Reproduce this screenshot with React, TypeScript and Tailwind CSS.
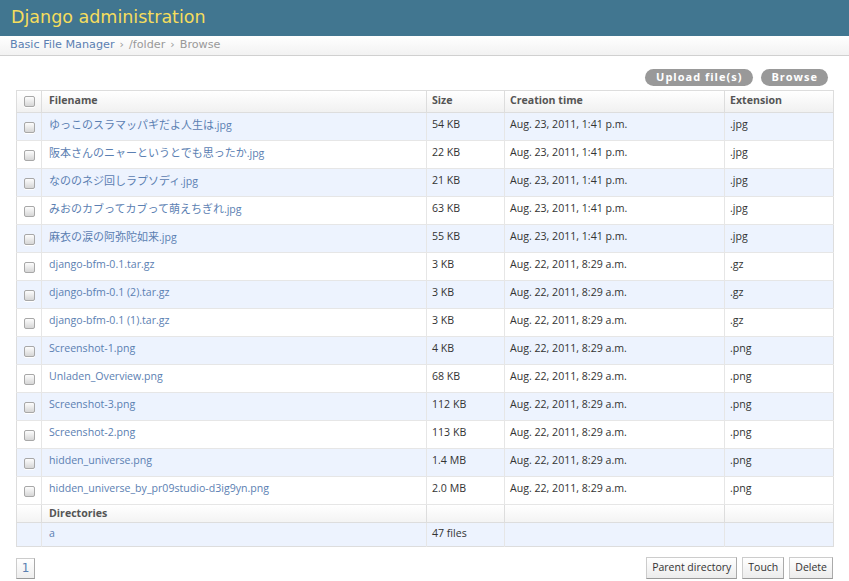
import React from "react";

const files: [string, string, string, string, boolean][] = [
  ["ゆっこのスラマッパギだよ人生は", "54 KB", "Aug. 23, 2011, 1:41 p.m.", ".jpg", true],
  ["阪本さんのニャーというとでも思ったか", "22 KB", "Aug. 23, 2011, 1:41 p.m.", ".jpg", true],
  ["なののネジ回しラプソディ", "21 KB", "Aug. 23, 2011, 1:41 p.m.", ".jpg", true],
  ["みおのカブってカブって萌えちぎれ", "63 KB", "Aug. 23, 2011, 1:41 p.m.", ".jpg", true],
  ["麻衣の涙の阿弥陀如来", "55 KB", "Aug. 23, 2011, 1:41 p.m.", ".jpg", true],
  ["django-bfm-0.1.tar.gz", "3 KB", "Aug. 22, 2011, 8:29 a.m.", ".gz", false],
  ["django-bfm-0.1 (2).tar.gz", "3 KB", "Aug. 22, 2011, 8:29 a.m.", ".gz", false],
  ["django-bfm-0.1 (1).tar.gz", "3 KB", "Aug. 22, 2011, 8:29 a.m.", ".gz", false],
  ["Screenshot-1.png", "4 KB", "Aug. 22, 2011, 8:29 a.m.", ".png", false],
  ["Unladen_Overview.png", "68 KB", "Aug. 22, 2011, 8:29 a.m.", ".png", false],
  ["Screenshot-3.png", "112 KB", "Aug. 22, 2011, 8:29 a.m.", ".png", false],
  ["Screenshot-2.png", "113 KB", "Aug. 22, 2011, 8:29 a.m.", ".png", false],
  ["hidden_universe.png", "1.4 MB", "Aug. 22, 2011, 8:29 a.m.", ".png", false],
  ["hidden_universe_by_pr09studio-d3ig9yn.png", "2.0 MB", "Aug. 22, 2011, 8:29 a.m.", ".png", false],
];

function Check() {
  return (
    <span className="inline-block w-[11px] h-[11px] rounded-[2px] border border-[#a8a8a8] bg-gradient-to-b from-[#fdfdfd] to-[#d6d6d6] shadow-[0_1px_0_#fff]" />
  );
}

const sans = "font-['Open_Sans','Noto_Sans_CJK_JP',sans-serif]";
const dv = "font-['DejaVu_Sans',sans-serif]";
const btn =
  "h-[22px] px-[5px] border border-[#ccc] border-b-[#999] border-r-[#aaa] bg-gradient-to-b from-white to-[#ececec] flex items-center text-[10.5px] text-[#333]";

export default function App() {
  return (
    <div className={`w-[849px] h-[581px] bg-white overflow-hidden ${sans}`}>
      <div className="h-[36px] bg-[#417690] flex items-center px-[11px]">
        <h1 className={`${dv} text-[17.5px] text-[#f5dd5d] leading-none`}>Django administration</h1>
      </div>
      <div className={`h-[20px] border-b border-[#d0d0d0] bg-gradient-to-b from-white to-[#f2f2f2] flex items-center px-[10px] text-[11.2px] ${dv}`}>
        <span className="text-[#5b80b2]">Basic File Manager</span>
        <span className="text-[#999] mx-[5px]">›</span>
        <span className="text-[#999]">/folder</span>
        <span className="text-[#999] mx-[5px]">›</span>
        <span className="text-[#999]">Browse</span>
      </div>
      <div className="px-[16px] pt-[13px]">
        <div className="flex justify-end gap-[8px] pr-[5px] h-[17px]">
          <span className="h-[17px] px-[11px] rounded-full bg-[#999] text-white text-[11px] font-bold tracking-[1px] flex items-center">Upload file(s)</span>
          <span className="h-[17px] px-[10px] rounded-full bg-[#999] text-white text-[11px] font-bold tracking-[1px] flex items-center">Browse</span>
        </div>
        <table className="mt-[4px] w-[818px] border-collapse border border-[#ddd] text-[10.6px] table-fixed">
          <colgroup>
            <col className="w-[25px]" />
            <col className="w-[385px]" />
            <col className="w-[78px]" />
            <col className="w-[220px]" />
            <col />
          </colgroup>
          <thead>
            <tr className="h-[22px] bg-gradient-to-b from-white to-[#f0f0f0] text-[#555] font-bold">
              <th className="border-r border-b border-[#ddd] align-middle"><div className="flex justify-center"><Check /></div></th>
              <th className="border-r border-b border-[#ddd] text-left px-[7px] align-top pt-[2px]">Filename</th>
              <th className="border-r border-b border-[#ddd] text-left px-[5px] align-top pt-[2px]">Size</th>
              <th className="border-r border-b border-[#ddd] text-left px-[5px] align-top pt-[2px]">Creation time</th>
              <th className="border-b border-[#ddd] text-left px-[5px] align-top pt-[2px]">Extension</th>
            </tr>
          </thead>
          <tbody>
            {files.map((f, i) => (
              <tr key={i} className={`h-[28px] ${i % 2 === 0 ? "bg-[#edf3fe]" : "bg-white"} text-[#333]`}>
                <td className="border-r border-b border-[#e6e6e6] align-middle"><div className="flex justify-center pt-[2px]"><Check /></div></td>
                <td className="border-r border-b border-[#e6e6e6] px-[7px] text-[#5b80b2] whitespace-nowrap align-top pt-[4px]">
                  {f[4] ? (
                    <>
                      <span className="text-[11px]">{f[0]}</span>.jpg
                    </>
                  ) : (
                    f[0]
                  )}
                </td>
                <td className="border-r border-b border-[#e6e6e6] px-[5px] align-top pt-[4px]">{f[1]}</td>
                <td className="border-r border-b border-[#e6e6e6] px-[5px] align-top pt-[4px]">{f[2]}</td>
                <td className="border-b border-[#e6e6e6] px-[5px] align-top pt-[4px]">{f[3]}</td>
              </tr>
            ))}
            <tr className="h-[18px] bg-gradient-to-b from-white to-[#f3f3f3]">
              <td className="border-r border-b border-[#ddd]"></td>
              <td className="border-r border-b border-[#ddd] px-[7px] font-bold text-[#555]">Directories</td>
              <td className="border-r border-b border-[#ddd]"></td>
              <td className="border-r border-b border-[#ddd]"></td>
              <td className="border-b border-[#ddd]"></td>
            </tr>
            <tr className="h-[24px] bg-[#edf3fe] text-[#333]">
              <td className="border-r border-[#e6e6e6]"></td>
              <td className="border-r border-[#e6e6e6] px-[7px] text-[#5b80b2] align-top pt-[3px]">a</td>
              <td className="border-r border-[#e6e6e6] px-[5px] align-top pt-[3px]">47 files</td>
              <td className="border-r border-[#e6e6e6]"></td>
              <td></td>
            </tr>
          </tbody>
        </table>
        <div className="flex justify-between items-center mt-[10px]">
          <span className={`w-[19px] h-[21px] border border-[#ccc] border-b-[#999] border-r-[#aaa] bg-gradient-to-b from-white to-[#eee] flex items-center justify-center text-[#5b80b2] text-[12px] ${dv}`}>1</span>
          <div className="flex gap-[5px]">
            <span className={btn}>Parent directory</span>
            <span className={btn}>Touch</span>
            <span className={btn}>Delete</span>
          </div>
        </div>
      </div>
    </div>
  );
}
